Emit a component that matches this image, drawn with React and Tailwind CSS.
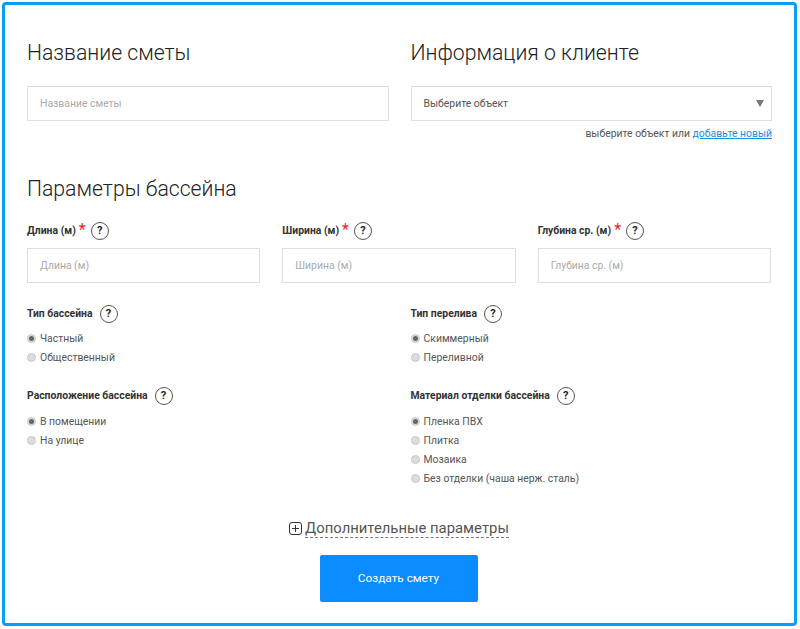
const font = { fontFamily: 'Roboto, sans-serif' };

function Help() {
  return (
    <span className="w-[18px] h-[18px] rounded-full border border-[#555] flex items-center justify-center text-[11px] font-bold text-[#222] bg-white">?</span>
  );
}

function Label({ text, req, gap = 'gap-[7px]' }) {
  return (
    <div className={'flex items-center h-[20px] ' + gap}>
      <div className="text-[10.4px] font-bold text-[#333] leading-[20px]">
        {text}
        {req && <span className="text-[#f0202c] text-[16px] font-normal leading-[16px] ml-[3px] relative top-[1px]">*</span>}
      </div>
      <Help />
    </div>
  );
}

function Radio({ text, checked }) {
  return (
    <div className="flex items-center h-[19px] gap-[4px]">
      <span className="w-[9px] h-[9px] rounded-full bg-[#dcdcdc] border border-[#c8c8c8] flex items-center justify-center">
        {checked && <span className="w-[5px] h-[5px] rounded-full bg-[#666]" />}
      </span>
      <span className="text-[10.4px] text-[#555]">{text}</span>
    </div>
  );
}

function Field({ text }) {
  return (
    <div className="h-[35px] border border-[#dedede] flex items-center pl-[12px] text-[10.4px] text-[#aaa]">{text}</div>
  );
}

export default function App() {
  return (
    <div style={font} className="w-[800px] h-[629px] bg-white pl-[2px] pr-[3px] pt-[2px] pb-[3px]">
      <div className="h-full border-[3px] border-[#05a0f5] rounded-[4px] pl-[22px] pr-[22px] pt-[33px]">
        <div className="grid grid-cols-2 gap-x-[22px]">
          <div>
            <h2 className="text-[21.2px] font-light text-[#222] leading-[30px]">Название сметы</h2>
            <div className="mt-[18px]"><Field text="Название сметы" /></div>
          </div>
          <div>
            <h2 className="text-[21.2px] font-light text-[#222] leading-[30px]">Информация о клиенте</h2>
            <div className="mt-[18px] h-[35px] border border-[#dedede] flex items-center justify-between pl-[12px] pr-[7px] text-[10.4px] text-[#555]">
              Выберите объект
              <span className="w-0 h-0 border-l-[4px] border-r-[4px] border-t-[7px] border-l-transparent border-r-transparent border-t-[#777]" />
            </div>
            <div className="text-right text-[10.4px] text-[#555] mt-[5px] leading-[16px]">
              выберите объект или <a href="#" className="text-[#1a8ee0] underline">добавьте новый</a>
            </div>
          </div>
        </div>

        <h2 className="text-[21.2px] font-light text-[#222] leading-[30px] mt-[32px]">Параметры бассейна</h2>
        <div className="grid grid-cols-3 gap-x-[22px] pr-[1px] mt-[17px]">
          {['Длина (м)', 'Ширина (м)', 'Глубина ср. (м)'].map((t) => (
            <div key={t}>
              <Label text={t} req gap="gap-[5px]" />
              <div className="mt-[7px]"><Field text={t} /></div>
            </div>
          ))}
        </div>

        <div className="grid grid-cols-2 gap-x-[22px] mt-[21px]">
          <div>
            <Label text="Тип бассейна" />
            <div className="mt-[5px]">
              <Radio text="Частный" checked />
              <Radio text="Общественный" />
            </div>
            <div className="mt-[19px]">
              <Label text="Расположение бассейна" />
              <div className="mt-[6px]">
                <Radio text="В помещении" checked />
                <Radio text="На улице" />
              </div>
            </div>
          </div>
          <div>
            <Label text="Тип перелива" />
            <div className="mt-[5px]">
              <Radio text="Скиммерный" checked />
              <Radio text="Переливной" />
            </div>
            <div className="mt-[19px]">
              <Label text="Материал отделки бассейна" />
              <div className="mt-[6px]">
                <Radio text="Пленка ПВХ" checked />
                <Radio text="Плитка" />
                <Radio text="Мозаика" />
                <Radio text="Без отделки (чаша нерж. сталь)" />
              </div>
            </div>
          </div>
        </div>

        <div className="flex justify-center items-center gap-[3px] pr-[1px] mt-[31px]">
          <svg width="13" height="13" viewBox="0 0 13 13" fill="none" stroke="#333" strokeWidth="1">
            <rect x="0.5" y="0.5" width="12" height="12" rx="2.5" />
            <path d="M6.5 3v7M3 6.5h7" />
          </svg>
          <span className="text-[14.85px] text-[#555] leading-[18px] border-b border-dashed border-[#777]">Дополнительные параметры</span>
        </div>
        <div className="flex justify-center pr-[2px] mt-[17px]">
          <button className="w-[158px] h-[47px] bg-[#0a8cff] rounded-[2px] text-white text-[11.8px]">Создать смету</button>
        </div>
      </div>
    </div>
  );
}
